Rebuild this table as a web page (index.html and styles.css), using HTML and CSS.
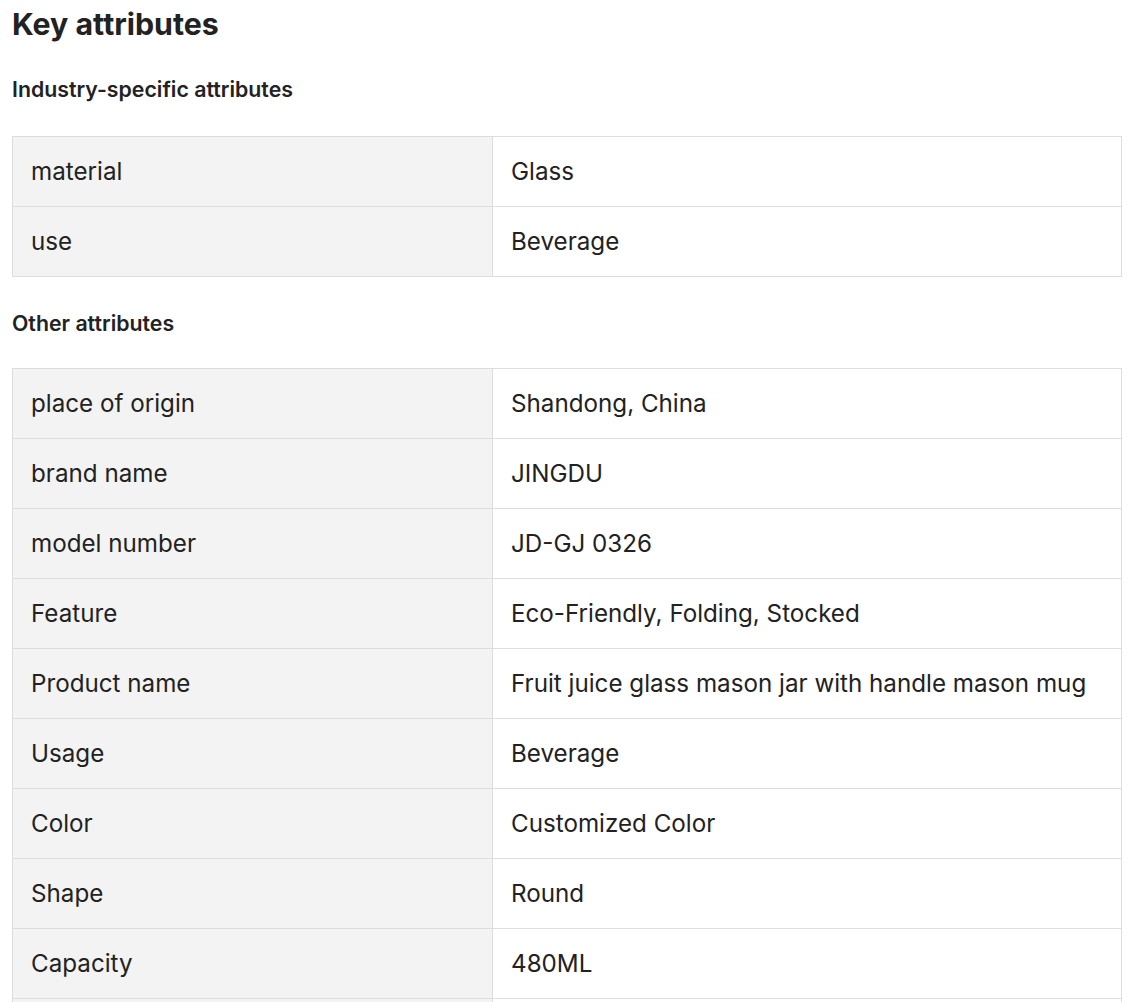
FILE: index.html
```html
<!DOCTYPE html>
<html lang="en">
<head>
<meta charset="utf-8">
<title>Key attributes</title>
<link rel="stylesheet" href="styles.css">
</head>
<body>
<div class="page">
  <h2 class="title">Key attributes</h2>
  <h3 class="subtitle">Industry-specific attributes</h3>
  <table class="attrs">
    <tr><td class="name">material</td><td class="value">Glass</td></tr>
    <tr><td class="name">use</td><td class="value">Beverage</td></tr>
  </table>
  <h3 class="subtitle second">Other attributes</h3>
  <table class="attrs">
    <tr><td class="name">place of origin</td><td class="value">Shandong, China</td></tr>
    <tr><td class="name">brand name</td><td class="value">JINGDU</td></tr>
    <tr><td class="name">model number</td><td class="value">JD-GJ 0326</td></tr>
    <tr><td class="name">Feature</td><td class="value">Eco-Friendly, Folding, Stocked</td></tr>
    <tr><td class="name">Product name</td><td class="value">Fruit juice glass mason jar with handle mason mug</td></tr>
    <tr><td class="name">Usage</td><td class="value">Beverage</td></tr>
    <tr><td class="name">Color</td><td class="value">Customized Color</td></tr>
    <tr><td class="name">Shape</td><td class="value">Round</td></tr>
    <tr><td class="name">Capacity</td><td class="value">480ML</td></tr>
    <tr><td class="name"></td><td class="value"></td></tr>
  </table>
</div>
</body>
</html>
```
FILE: styles.css
```css
html, body {
  margin: 0;
  padding: 0;
  background: #fff;
}
body {
  font-family: Inter, "Noto Sans", sans-serif;
  color: #222;
}
.page {
  padding: 0 12px;
}
.title {
  margin: 0;
  padding-top: 6px;
  font-size: 30.3px;
  line-height: 36px;
  font-weight: 700;
}
.subtitle {
  margin: 0;
  padding: 33px 0;
  font-size: 21.3px;
  line-height: 28px;
  font-weight: 600;
}
.subtitle.second {
  padding: 32px 0 31px;
}
.attrs {
  width: 100%;
  border-collapse: collapse;
  table-layout: fixed;
}
.attrs td {
  height: 69px;
  padding: 0 18px;
  border: 1px solid #ddd;
  font-size: 24.2px;
  line-height: 28px;
  vertical-align: middle;
}
.attrs .name {
  width: 480px;
  box-sizing: border-box;
  background: #f3f3f3;
}
.attrs .value {
  background: #fff;
}
```
